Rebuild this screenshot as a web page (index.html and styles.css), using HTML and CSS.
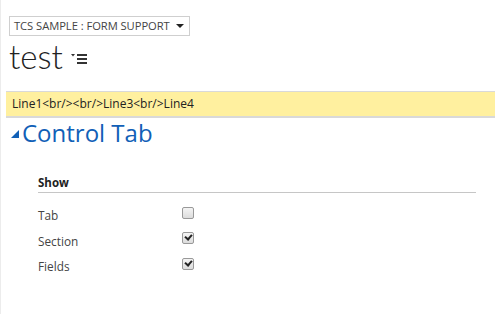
FILE: index.html
```html
<!DOCTYPE html>
<html>
<head>
<meta charset="utf-8">
<link rel="stylesheet" href="styles.css">
</head>
<body>
<div class="page">
  <header class="header">
    <div class="form-select">
      <span class="form-select-text">TCS SAMPLE : FORM SUPPORT</span>
      <span class="caret"></span>
    </div>
    <div class="title-row">
      <h1 class="title">test</h1>
      <svg class="menu-icon" width="16" height="11" viewBox="0 0 16 11">
        <polygon points="0,1 4,1 2,3.5" fill="#333"/>
        <rect x="6" y="1" width="10" height="2" fill="#333"/>
        <rect x="6" y="5" width="10" height="2" fill="#333"/>
        <rect x="6" y="9" width="10" height="2" fill="#333"/>
      </svg>
    </div>
  </header>
  <div class="notice">Line1&lt;br/&gt;&lt;br/&gt;Line3&lt;br/&gt;Line4</div>
  <div class="tab-header">
    <svg class="tab-toggle" width="8" height="8" viewBox="0 0 8 8"><polygon points="8,0 8,8 0,8" fill="#1160b7"/></svg>
    <span class="tab-title">Control Tab</span>
  </div>
  <section class="section">
    <div class="section-title">Show</div>
    <div class="rows">
      <div class="row"><span class="label">Tab</span><span class="check"></span></div>
      <div class="row"><span class="label">Section</span><span class="check checked"></span></div>
      <div class="row"><span class="label">Fields</span><span class="check checked"></span></div>
    </div>
  </section>
</div>
</body>
</html>
```
FILE: styles.css
```css
html, body { margin: 0; padding: 0; background: #fff; }
body { font-family: "Open Sans", "Noto Sans", sans-serif; color: #333; }
.page { height: 314px; border-left: 1px solid #ececec; box-sizing: border-box; }
.header { padding: 13px 0 0 8px; }
.form-select {
  display: inline-flex; align-items: center; height: 20px; box-sizing: border-box;
  border: 1px solid #cfcfcf; padding: 0 5px 0 4px; font-size: 11.2px; color: #444;
  letter-spacing: -0.05px;
}
.caret { width: 0; height: 0; border-left: 4px solid transparent; border-right: 4px solid transparent; border-top: 4px solid #222; margin-left: 6px; }
.title-row { display: flex; align-items: flex-end; height: 40px; }
.title { margin: 0; font-family: "Lato", "Open Sans", sans-serif; font-weight: 300; font-size: 33px; line-height: 40px; color: #222; }
.menu-icon { margin: 0 0 12px 8px; }
.notice {
  margin: 15px 0 0 5px; height: 27px; box-sizing: border-box; background: #fff09f;
  border-top: 1px solid #d9d9d9; border-bottom: 2px solid #d9d9d9;
  font-size: 12px; line-height: 24px; padding-left: 6px; color: #222;
}
.tab-header { display: flex; align-items: center; padding: 1px 0 0 10px; height: 28px; }
.tab-toggle { margin-right: 3px; margin-top: 2px; }
.tab-title { font-size: 24px; color: #1160b7; line-height: 28px; }
.section { padding: 28px 19px 0 37px; }
.section-title { font-size: 11.5px; font-weight: 700; color: #222; padding-bottom: 2px; border-bottom: 1px solid #c6c6c6; }
.rows { padding-top: 10px; }
.row { display: flex; align-items: center; height: 25.5px; }
.label { width: 144px; font-size: 11.8px; color: #444; }
.check {
  width: 10px; height: 10px; border: 1px solid #999; border-radius: 2px;
  background: linear-gradient(#f4f4f4, #dcdcdc); position: relative; margin-top: -5px;
}
.check.checked::after {
  content: ""; position: absolute; left: 2px; top: 1px; width: 5px; height: 3px;
  border-left: 2px solid #222; border-bottom: 2px solid #222; transform: rotate(-50deg);
}
```
